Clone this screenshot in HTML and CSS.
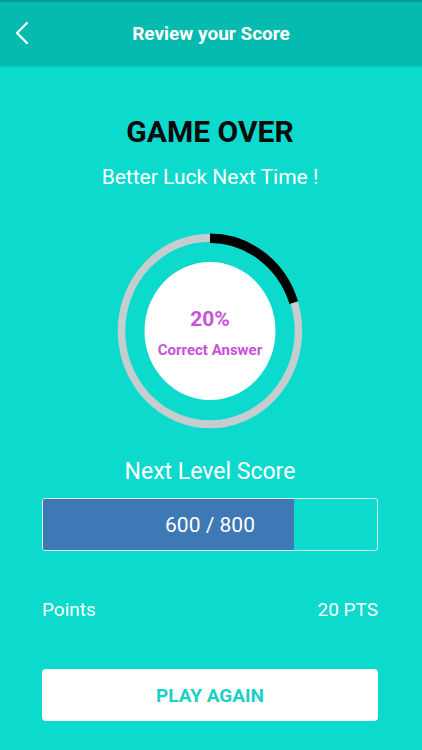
FILE: index.html
```html
<!DOCTYPE html>
<html lang="en">
<head>
<meta charset="utf-8">
<title>Review your Score</title>
<link rel="stylesheet" href="styles.css">
</head>
<body>
<header class="topbar">
  <button class="back" aria-label="Back">
    <svg width="14" height="22" viewBox="0 0 14 22"><polyline points="12,1 2,11 12,21" fill="none" stroke="#ffffff" stroke-width="2.2" stroke-linecap="round" stroke-linejoin="round"/></svg>
  </button>
  <h2 class="title">Review your Score</h2>
  <span class="spacer"></span>
</header>
<main class="content">
  <h1 class="headline">GAME OVER</h1>
  <p class="subtitle">Better Luck Next Time !</p>
  <div class="gauge">
    <svg class="gauge-svg" width="186" height="196" viewBox="0 0 186 186" preserveAspectRatio="none">
      <circle cx="93" cy="93" r="88.5" fill="none" stroke="#c5cdcf" stroke-width="7.5"/>
      <circle cx="93" cy="93" r="88" fill="none" stroke="#000000" stroke-width="9" stroke-dasharray="110.6 1000" transform="rotate(-90 93 93)"/>
      <circle cx="93" cy="93" r="65.5" fill="#ffffff"/>
    </svg>
    <div class="gauge-text">
      <span class="pct">20%</span>
      <span class="pct-label">Correct Answer</span>
    </div>
  </div>
  <p class="level-title">Next Level Score</p>
  <div class="bar">
    <div class="bar-fill" style="width:75%"></div>
    <span class="bar-text">600 / 800</span>
  </div>
  <div class="points">
    <span>Points</span>
    <span>20 PTS</span>
  </div>
  <button class="play">PLAY AGAIN</button>
</main>
</body>
</html>
```
FILE: styles.css
```css
* { box-sizing: border-box; }
html, body { margin: 0; padding: 0; }
body {
  background: #0bdacd;
  font-family: Roboto, "Liberation Sans", sans-serif;
  color: #ffffff;
  width: 422px;
  height: 750px;
  overflow: hidden;
}
.topbar {
  height: 66px;
  background: #05bbb0;
  border-top: 2px solid #089a92;
  display: grid;
  grid-template-columns: 60px 1fr 60px;
  align-items: center;
  box-shadow: 0 1px 1px rgba(0,0,0,0.06);
}
.back {
  background: none;
  border: none;
  padding: 0 0 0 15px;
  margin: 0;
  display: flex;
  align-items: center;
  height: 100%;
  margin-top: -2px;
}
.title {
  margin: 0;
  margin-top: -2px;
  text-align: center;
  font-size: 19px;
  font-weight: 700;
  color: #ffffff;
}
.content {
  display: flex;
  flex-direction: column;
  align-items: center;
  padding: 0 44px 0 42px;
}
.headline {
  margin: 48px 0 0;
  font-size: 30px;
  line-height: 36px;
  font-weight: 700;
  color: #0a0a0a;
}
.subtitle {
  margin: 14px 0 0;
  font-size: 21px;
  line-height: 26px;
}
.gauge {
  position: relative;
  margin-top: 43px;
  width: 186px;
  height: 196px;
}
.gauge-svg { display: block; }
.gauge-text {
  position: absolute;
  inset: 0;
  display: flex;
  flex-direction: column;
  align-items: center;
  justify-content: center;
  padding-top: 4px;
  gap: 10px;
  color: #c852d9;
  font-weight: 700;
}
.pct { font-size: 21px; line-height: 24px; }
.pct-label { font-size: 15px; line-height: 18px; }
.level-title {
  margin: 29px 0 0;
  font-size: 23px;
  line-height: 28px;
}
.bar {
  position: relative;
  margin-top: 12px;
  width: 100%;
  height: 53px;
  border: 1px solid #d6f6f3;
  border-radius: 3px;
  overflow: hidden;
  display: flex;
}
.bar-fill {
  height: 100%;
  background: #3e78b5;
}
.bar-text {
  position: absolute;
  inset: 0;
  display: flex;
  align-items: center;
  justify-content: center;
  font-size: 21px;
  color: #ffffff;
}
.points {
  margin-top: 47px;
  width: 100%;
  display: flex;
  justify-content: space-between;
  font-size: 19px;
  line-height: 24px;
}
.play {
  margin-top: 47px;
  width: 100%;
  height: 52px;
  border: none;
  border-radius: 4px;
  background: #ffffff;
  color: #1cd0c5;
  font-family: Roboto, "Liberation Sans", sans-serif;
  font-size: 19px;
  font-weight: 700;
}
```
